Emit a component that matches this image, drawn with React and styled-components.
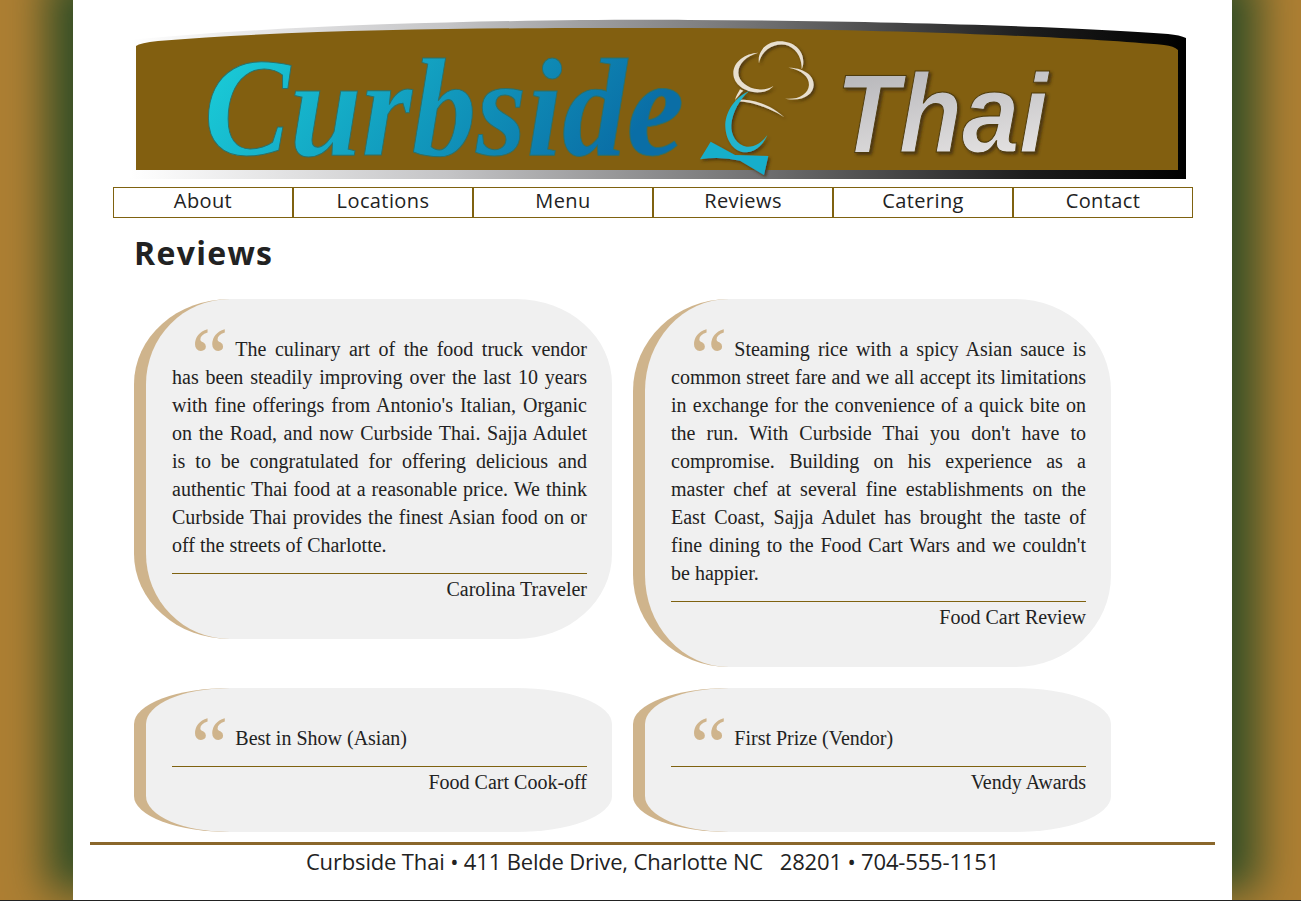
import React from 'react';
import styled, { createGlobalStyle } from 'styled-components';

const GlobalStyle = createGlobalStyle`
  html, body {
    margin: 0;
    padding: 0;
    height: 100%;
    overflow: hidden;
    background: #ae7f33;
  }
`;

const Page = styled.div`
  height: 901px;
  overflow: hidden;
  background: #ae7f33;
  border-bottom: 1px solid #222;
  box-sizing: border-box;
`;

const Wrapper = styled.div`
  width: 1159px;
  height: 866px;
  margin-left: 73px;
  background: #fff;
  box-shadow: 0 0 40px 26px #324e26;
`;

const Sheet = styled.div`
  background: #fff;
  height: 900px;
`;

const Banner = styled.div`
  padding: 17px 0 0 55px;
  height: 170px;
  svg { display: block; }
`;

const Nav = styled.nav`
  display: flex;
  margin-left: 40px;
`;

const NavItem = styled.a`
  width: 180px;
  height: 31px;
  box-sizing: border-box;
  border: 1px solid #7f6210;
  font: 20px/26px "Open Sans", sans-serif;
  letter-spacing: 0.4px;
  text-align: center;
  color: #222;
`;

const Title = styled.h1`
  margin: 13px 0 24px 61px;
  font: bold 32px/44px "Open Sans", sans-serif;
  letter-spacing: 1.3px;
  color: #222;
`;

const Cards = styled.div`
  display: grid;
  grid-template-columns: 478px 478px;
  gap: 21px;
  align-items: start;
  margin-left: 61px;
`;

const Card = styled.blockquote`
  margin: 0;
  box-sizing: border-box;
  border-left: 12px solid #cfb48c;
  border-radius: 20% / 25%;
  background: #f0f0f0;
  padding: 36px 25px 36px 26px;
  font: 20px/28px "Liberation Serif", serif;
  color: #222;
`;

const Quote = styled.p`
  margin: 0;
  text-align: justify;

  &::before {
    content: "“";
    font-size: 84px;
    line-height: 0;
    color: #cfb48c;
    margin-left: 19px;
    margin-right: 7px;
    vertical-align: -30px;
  }
`;

const Source = styled.footer`
  border-top: 1px solid #7f6210;
  margin-top: 14px;
  padding-top: 1px;
  text-align: right;
`;

const Footer = styled.footer`
  margin: 10px 17px 0;
  border-top: 3px solid #8a672b;
  font: 22px/32px "Open Sans", sans-serif;
  letter-spacing: -0.16px;
  text-align: center;
  color: #222;
  white-space: pre;
`;

function Logo() {
  return (
    <svg width="1060" height="170" viewBox="0 0 1060 170">
      <defs>
        <linearGradient id="rim" x1="0" x2="1" y1="0" y2="0">
          <stop offset="0" stopColor="#ffffff" />
          <stop offset="0.3" stopColor="#c4c4c6" />
          <stop offset="0.6" stopColor="#6f6f70" />
          <stop offset="0.85" stopColor="#1d1d1d" />
          <stop offset="1" stopColor="#000" />
        </linearGradient>
        <linearGradient id="script" x1="0" x2="1" y1="0" y2="0.25">
          <stop offset="0" stopColor="#1bd2db" />
          <stop offset="1" stopColor="#0a6ea6" />
        </linearGradient>
        <linearGradient id="silver" x1="0" x2="0.3" y1="0" y2="1">
          <stop offset="0" stopColor="#aeaeb2" />
          <stop offset="1" stopColor="#e4e2e2" />
        </linearGradient>
        <filter id="soft" x="-10%" y="-10%" width="120%" height="120%">
          <feDropShadow dx="2" dy="2" stdDeviation="1.5" floodColor="#3c2c08" floodOpacity="0.8" />
        </filter>
      </defs>
      <path d="M2 23 C170 6 420 2 560 3 C760 4 950 10 1040 17 Q1052 18 1058 21 L1058 162 L2 162 Z" fill="url(#rim)" />
      <path d="M8 29 Q12 26 30 24 C200 10 420 11 560 11 C760 12 950 20 1036 28 Q1046 29 1050 33 L1050 153 L8 153 Z" fill="#825f10" />
      <text x="76" y="138" fill="url(#script)" stroke="#2f6f66" strokeWidth="1" fontFamily="'Liberation Serif', serif" fontStyle="italic" fontWeight="bold" fontSize="140" textLength="480" lengthAdjust="spacingAndGlyphs">Curbside</text>
      <text x="708" y="135" fill="url(#silver)" stroke="#4d3a0c" strokeWidth="1" fontFamily="'Liberation Sans', sans-serif" fontStyle="italic" fontWeight="bold" fontSize="112" textLength="212" lengthAdjust="spacingAndGlyphs" filter="url(#soft)">Thai</text>
      <g filter="url(#soft)">
        <g transform="translate(562 13) scale(0.3333)">
          <g fill="#e8dfcf">
            <path d="M205 68 C165 70 130 95 130 130 C130 165 170 190 210 187 C228 186 242 178 250 168 C238 176 222 180 205 178 C175 175 145 155 145 128 C145 100 170 78 205 68 Z" />
            <path d="M207 100 C200 60 235 33 270 34 C310 34 340 60 340 95 C340 105 338 112 335 118 C336 90 325 60 295 47 C262 35 215 55 207 100 Z" />
            <path d="M295 113 C330 112 372 130 371 165 C370 195 335 218 278 205 C320 212 355 195 357 165 C358 140 335 120 295 113 Z" />
            <path d="M135 213 C175 200 240 222 283 262 C240 235 190 215 135 213 Z" />
            <path d="M150 178 L160 182 C150 190 145 200 135 210 C138 198 145 188 150 178 Z" />
          </g>
          <path d="M178 183 C130 205 105 250 106 290 C108 335 135 368 170 367 C200 365 222 340 232 315 C215 340 192 352 170 350 C140 345 122 315 124 285 C126 250 150 205 178 183 Z" fill="#22b4cc" />
          <path d="M62 335 L135 375 L235 378 L222 435 L150 392 Q90 378 30 388 Z" fill="#14aecb" />
        </g>
      </g>
    </svg>
  );
}

const navItems = ['About', 'Locations', 'Menu', 'Reviews', 'Catering', 'Contact'];

const reviews = [
  {
    text: "The culinary art of the food truck vendor has been steadily improving over the last 10 years with fine offerings from Antonio's Italian, Organic on the Road, and now Curbside Thai. Sajja Adulet is to be congratulated for offering delicious and authentic Thai food at a reasonable price. We think Curbside Thai provides the finest Asian food on or off the streets of Charlotte.",
    source: 'Carolina Traveler',
  },
  {
    text: "Steaming rice with a spicy Asian sauce is common street fare and we all accept its limitations in exchange for the convenience of a quick bite on the run. With Curbside Thai you don't have to compromise. Building on his experience as a master chef at several fine establishments on the East Coast, Sajja Adulet has brought the taste of fine dining to the Food Cart Wars and we couldn't be happier.",
    source: 'Food Cart Review',
  },
  { text: 'Best in Show (Asian)', source: 'Food Cart Cook-off' },
  { text: 'First Prize (Vendor)', source: 'Vendy Awards' },
];

export default function App() {
  return (
    <Page>
      <GlobalStyle />
      <Wrapper>
        <Sheet>
          <Banner>
            <Logo />
          </Banner>
          <Nav>
            {navItems.map((item) => (
              <NavItem key={item}>{item}</NavItem>
            ))}
          </Nav>
          <Title>Reviews</Title>
          <Cards>
            {reviews.map((r) => (
              <Card key={r.source}>
                <Quote>{r.text}</Quote>
                <Source>{r.source}</Source>
              </Card>
            ))}
          </Cards>
          <Footer>{'Curbside Thai • 411 Belde Drive, Charlotte NC   28201 • 704-555-1151'}</Footer>
        </Sheet>
      </Wrapper>
    </Page>
  );
}
